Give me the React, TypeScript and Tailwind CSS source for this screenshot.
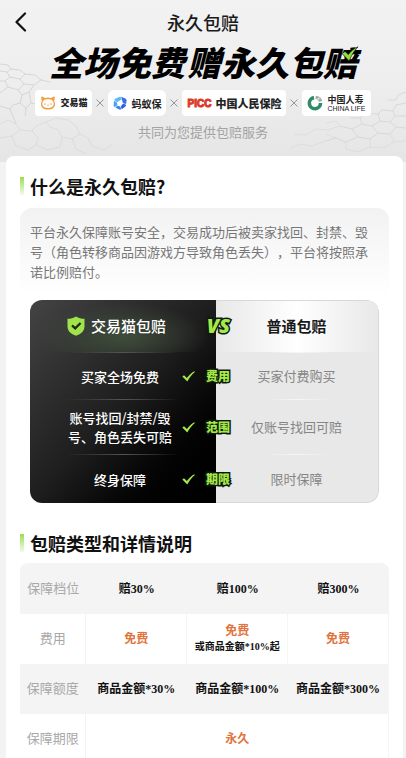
import React from "react";

const compareRows = [
  { tag: "费用", ours: ["买家全场免费"], other: "买家付费购买", height: "h-[46px]" },
  { tag: "范围", ours: ["账号找回/封禁/毁", "号、角色丢失可赔"], other: "仅账号找回可赔", height: "h-[54px]" },
  { tag: "期限", ours: ["终身保障"], other: "限时保障", height: "h-12" },
];

const outline =
  "font-black text-[#a4e94a] [paint-order:stroke_fill] [-webkit-text-stroke:3px_#10180a]";

function Times() {
  return (
    <svg viewBox="0 0 8 8" className="h-2 w-2 shrink-0" stroke="#8c8c8c" strokeWidth="0.9">
      <path d="M0.5 0.5 7.5 7.5M7.5 0.5 0.5 7.5" />
    </svg>
  );
}

function Tick({ className }: { className: string }) {
  return (
    <svg viewBox="0 0 13 11" className={className} fill="#a4e94a">
      <path d="M0.3 5.4 2 4.2 4.9 6.9C7 4.2 9.4 2 12.4 0.3L12.8 0.9C9.9 3.4 7.4 6.6 5.3 10.5Z" />
    </svg>
  );
}

function CatLogo() {
  return (
    <svg viewBox="0.6 0.4 14.8 13" className="h-[14px] w-4 shrink-0" fill="none">
      <path
        d="M2.2 5.2 1.7 1.6C1.7 0.8 2.4 0.6 3 1L5.2 2.3Q8 1.5 10.8 2.3L13 1C13.6 0.6 14.3 0.8 14.3 1.6L13.8 5.2C15.8 9.3 13.6 13 8 13S0.2 9.3 2.2 5.2Z"
        fill="#eda043"
      />
      <path d="M3 6C3.6 3.9 5.4 3.4 8 3.4S12.4 3.9 13 6C14.2 9.4 12 11.6 8 11.6S1.8 9.4 3 6Z" fill="#fffaf3" />
      <path d="M4.3 7.9H6M10 7.9H11.7M7.3 8.8 8 9.3 8.7 8.8" stroke="#d9a263" strokeWidth="0.7" />
    </svg>
  );
}

function AntLogo() {
  return (
    <svg viewBox="0 0 14 14" className="h-[14px] w-[14px] shrink-0">
      <path d="M7.4 0.5 2.6 2.6C1.8 3 1.5 3.5 1.5 4.3L4 6.2 8.5 3.6Z" fill="#5dbcf8" />
      <path d="M1 4.8 0.6 9.2C0.6 10.2 1 10.8 1.8 11L4.4 9.2 3.9 6.5Z" fill="#4ba3f7" />
      <path d="M2.4 11.6 6.4 13.6C7.2 13.8 7.8 13.6 8.2 13L7.2 10.4 4.6 9.8Z" fill="#3b7cf2" />
      <path d="M8.8 13.2 12.4 10.4C13 9.8 13.1 9.2 12.8 8.6L9.9 7.8 7.8 10.4Z" fill="#2f5fe8" />
      <path d="M13.2 8 13.5 4.2C13.4 3.4 13 3 12.4 2.6L8.2 0.7 8.9 3.8 10 7.2Z" fill="#3a6eee" />
    </svg>
  );
}

function ChinaLifeLogo() {
  return (
    <svg viewBox="0 0 16 16" className="h-4 w-4 shrink-0" fill="none">
      <path d="M7 2.6A5.6 5.6 0 1 0 13.5 8" stroke="#2f8a68" strokeWidth="3.6" />
      <path d="M8.8 0.8A7.2 7.2 0 0 1 15.2 6L12 7A4 4 0 0 0 8.4 3.9Z" fill="#a7aaa8" />
      <path d="M9.8 3.4 13.6 2.2 11.4 5.2" fill="#dfe2e0" />
    </svg>
  );
}

function Cracks() {
  return (
    <svg
      viewBox="0 0 406 176"
      preserveAspectRatio="none"
      className="absolute inset-x-0 top-0 h-44 w-full"
      fill="none"
      stroke="#cbcbcb"
      strokeWidth="0.7"
    >
      <path d="M0 64 8 65 11 69 20 70 25 74 35 75 41 80M0 71 7 72 11 69M7 72 10 77 20 79 25 74M20 79 24 84 34 85 41 80 50 82M0 81 5 81 10 77M5 81 8 87 18 90 24 84M18 90 22 95 29 92 34 85M0 93 8 87M22 95 20 103 26 108 31 103 29 92M0 106 10 109 13 105 20 103M10 109 16 124M26 108 25 116M31 103 40 105" />
      <path opacity="0.6" d="M0 124 8 120 16 124 20 130 32 131 36 126 46 122 50 127 58 130 62 137 72 139 80 134 88 138M32 131 38 138 36 145 48 150 60 147 62 137M0 138 12 136 20 130M12 136 16 146 28 150 36 145M88 138 92 146 104 150 112 145M72 139 76 149 86 154M46 122 56 118 68 120 76 126 80 134" />
      <path opacity="0.8" d="M406 92 398 95 396 100 388 100M406 103 396 105 393 111 382 110 378 114 366 113 360 118 350 118M406 116 395 116 393 111M395 116 390 122 380 121 378 114M380 121 372 126 362 124 360 118M362 124 352 129 340 126M406 128 396 127 390 122M396 127 390 134 378 133 372 126M378 133 370 139 358 137 352 129M358 137 346 142 336 138 326 141" />
      <path opacity="0.5" d="M340 126 328 130 316 129 306 135 294 134M336 138 326 134M326 141 312 146 300 144 290 149M406 141 394 142 390 134M394 142 384 148 370 147 370 139M370 147 358 152 346 149 346 142M340 126 336 121 326 123" />
    </svg>
  );
}

function SectionTitle({ children }: { children: React.ReactNode }) {
  return (
    <div className="flex h-7 items-center gap-1.5">
      <span className="h-[18px] w-1 bg-gradient-to-b from-[#9bdc4c] to-[#f2fce6]" />
      <h2 className="text-lg leading-7 font-bold text-[#111]">{children}</h2>
    </div>
  );
}

function Divider() {
  return (
    <div className="grid grid-cols-[186fr_163fr]">
      <span className="mx-9 h-px bg-gradient-to-r from-transparent via-[#555] to-transparent" />
      <span className="mx-12 h-px bg-gradient-to-r from-transparent via-[#f6f6f6] to-transparent" />
    </div>
  );
}

export default function App() {
  return (
    <div className="h-screen overflow-y-auto bg-[#f3f3f3] font-['Noto_Sans_CJK_SC',sans-serif] [scrollbar-width:none]">
      <div className="relative bg-gradient-to-b from-[#f2f2f2] via-[#eeeeee] to-[#e5e5e5] pb-5">
        <Cracks />
        <div className="relative">
          {/* Nav bar */}
          <header className="grid h-11 grid-cols-[1fr_auto_1fr] items-center px-3">
            <button aria-label="返回" className="flex h-8 w-8 items-center">
              <svg viewBox="0 0 18 20" className="h-5 w-[18px]" fill="none" stroke="#111" strokeWidth="2.2" strokeLinecap="round" strokeLinejoin="round">
                <path d="M13 1.5 4.5 10 13 18.5" />
              </svg>
            </button>
            <h1 className="text-lg font-medium text-[#1a1a1a]">永久包赔</h1>
          </header>

          {/* Slogan */}
          <div className="flex justify-center">
            <p className="relative text-[34px] leading-9 font-black whitespace-nowrap text-black italic">
              全场免费<span className="ml-0.5">赠永久包赔</span>
              <svg viewBox="0 0 18 16" className="absolute top-0.5 -right-0.5 h-4 w-[18px]">
                <path d="M1 7.5 4 5.4 7.4 8.6C9.5 5.5 12.6 2.6 17 0.8C13.5 4.5 10.5 9 8.2 15Z" fill="#8fe03c" stroke="#111" strokeWidth="0.7" strokeLinejoin="round" />
              </svg>
            </p>
          </div>

          {/* Partners */}
          <div className="mt-2.5 flex items-center justify-center gap-1 text-[#222]">
            <span className="flex h-[26px] items-center gap-1 rounded bg-white px-[5px]">
              <CatLogo />
              <b className="text-[9px] font-black">交易猫</b>
            </span>
            <Times />
            <span className="flex h-[26px] items-center gap-1 rounded-md bg-white px-[5px]">
              <AntLogo />
              <b className="text-[10px] font-bold">蚂蚁保</b>
            </span>
            <Times />
            <span className="flex h-[26px] items-center gap-1 rounded bg-white px-[5px]">
              <b className="font-['Liberation_Sans',sans-serif] text-[10px] text-[#dc3a28] [-webkit-text-stroke:1px_#dc3a28]">PICC</b>
              <b className="text-[11px] font-black">中国人民保险</b>
            </span>
            <Times />
            <span className="flex h-[26px] items-center gap-1 rounded bg-white px-[5px]">
              <ChinaLifeLogo />
              <span className="flex flex-col">
                <b className="text-[9px] leading-[10px] font-bold">中国人寿</b>
                <span className="font-['Liberation_Sans',sans-serif] text-[7px] leading-[7px] whitespace-nowrap">CHINA LIFE</span>
              </span>
            </span>
          </div>
          <p className="mt-1.5 text-center text-[13px] leading-5 text-[#a3a3a3]">共同为您提供包赔服务</p>
        </div>
      </div>

      <main className="relative -mt-1.5 mr-[3px] ml-1.5 rounded-t-lg bg-white px-3.5 pt-4">
        <SectionTitle>什么是永久包赔?</SectionTitle>
        <p className="mt-2 rounded-t-xl bg-gradient-to-b from-[#f2f2f2] to-white px-2.5 py-3.5 text-[13px] leading-5 text-[#777] [text-spacing-trim:space-all]">
          平台永久保障账号安全，交易成功后被卖家找回、封禁、毁号（角色转移商品因游戏方导致角色丢失），平台将按照承诺比例赔付。
        </p>

        {/* Comparison */}
        <section className="relative mx-2.5 mt-1 overflow-hidden rounded-xl">
          <div className="absolute inset-0 grid grid-cols-[186fr_163fr]">
            <div className="bg-gradient-to-br from-[#444] via-[#1e1e1e] to-black">
              <div className="h-[52px] bg-[radial-gradient(ellipse_at_50%_70%,#3f4d3b,transparent_65%)]" />
            </div>
            <div className="rounded-r-xl border border-l-0 border-[#d8d8d8] bg-[#e8e8e8]">
              <div className="h-[51px] bg-gradient-to-r from-[#e8e8e8] via-white to-[#e8e8e8]" />
            </div>
          </div>
          <div className="relative">
            <div className="grid h-[52px] grid-cols-[148fr_56fr_145fr] items-center">
              <h3 className="flex items-center justify-end gap-1.5 pr-3 text-[15px] font-medium whitespace-nowrap text-white">
                <svg viewBox="0 0 18 20" className="h-5 w-[18px]" fill="#a0e34c">
                  <path d="M9 0.4C11.5 2 14.3 2.7 17.5 2.8V10.2C17.5 15 14 18.2 9 19.7C4 18.2 0.5 15 0.5 10.2V2.8C3.7 2.7 6.5 2 9 0.4Z" />
                  <path d="M5 9.4 8.2 12.4 13.6 7" fill="none" stroke="#1c2a12" strokeWidth="2.2" />
                </svg>
                交易猫包赔
              </h3>
              <span className={`pr-1 text-right font-['Open_Sans',sans-serif] text-xl italic ${outline}`}>VS</span>
              <h3 className="pr-5 text-center text-[15px] font-bold text-[#1a1a1a]">普通包赔</h3>
            </div>
            {compareRows.map((row) => (
              <React.Fragment key={row.tag}>
                <Divider />
                <div className={`grid grid-cols-[148fr_56fr_145fr] items-center text-[13px] ${row.height}`}>
                  <div className="pl-8 text-center leading-[19px] font-medium whitespace-nowrap text-white">
                    {row.ours.map((line) => (
                      <p key={line}>{line}</p>
                    ))}
                  </div>
                  <div className="flex items-center justify-between px-1">
                    <Tick className="h-[11px] w-[13px]" />
                    <span className={`text-xs ${outline}`}>{row.tag}</span>
                  </div>
                  <p className="pr-5 text-center text-[#858585]">{row.other}</p>
                </div>
              </React.Fragment>
            ))}
          </div>
        </section>

        <div className="mt-[26px]">
          <SectionTitle>包赔类型和详情说明</SectionTitle>
        </div>
        <table className="mt-1.5 w-full table-fixed border-separate border-spacing-0 overflow-hidden rounded-t-lg text-center font-['Liberation_Serif','Noto_Sans_CJK_SC',serif] text-xs font-bold text-[#111] [&_td]:border-r [&_td]:border-[#f5f5f5] [&_td]:p-0 [&_th]:p-0 [&_tbody_th]:border-r [&_tbody_th]:border-[#f2f2f2] [&_tbody_th]:text-[13px] [&_tbody_th]:font-normal [&_tbody_th]:text-[#a8a8a8]">
          <colgroup>
            <col className="w-[18%]" />
            <col />
            <col />
            <col />
          </colgroup>
          <thead>
            <tr className="h-[51px] bg-[#f4f4f4]">
              <th scope="col" className="text-[13px] font-normal text-[#a8a8a8]">保障档位</th>
              <th scope="col">赔30%</th>
              <th scope="col">赔100%</th>
              <th scope="col">赔300%</th>
            </tr>
          </thead>
          <tbody>
            <tr className="h-[50px] text-[#e0743c]">
              <th scope="row">费用</th>
              <td>免费</td>
              <td>
                <p className="leading-4">免费</p>
                <p className="text-[10px] leading-4 whitespace-nowrap text-[#111]">或商品金额*10%起</p>
              </td>
              <td>免费</td>
            </tr>
            <tr className="h-[50px] bg-[#f4f4f4]">
              <th scope="row">保障额度</th>
              <td>商品金额*30%</td>
              <td>商品金额*100%</td>
              <td>商品金额*300%</td>
            </tr>
            <tr className="h-[50px] text-[#e0743c]">
              <th scope="row">保障期限</th>
              <td colSpan={3}>永久</td>
            </tr>
          </tbody>
        </table>
      </main>
    </div>
  );
}
